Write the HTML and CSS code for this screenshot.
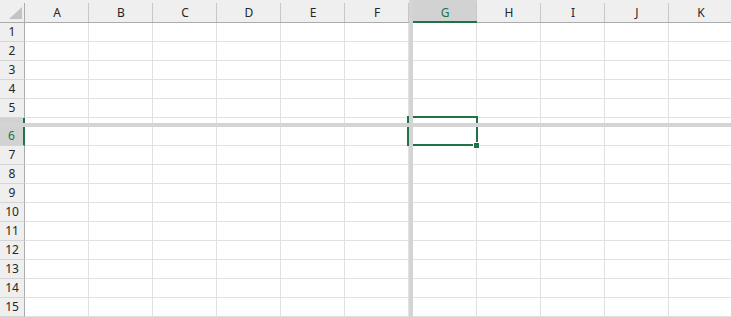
FILE: index.html
```html
<!doctype html>
<html>
<head>
<meta charset="utf-8">
<title>Sheet - split panes</title>
<link rel="stylesheet" href="styles.css">
</head>

<body>
<div class="sheet">
    <div class="pane pane-tl" id="tl"></div>
    <div class="vsplit"></div>
    <div class="pane pane-tr" id="tr"></div>
    <div class="hsplit"></div>
    <div class="pane pane-bl" id="bl"></div>
    <div class="pane pane-br" id="br"></div>
    <div class="selection"></div>
    <div class="handle"></div>
</div>
<script>
var letters = "ABCDEFGHIJK".split("");
var activeCol = "G";
var activeRow = 6;

// rowLabelTo: last row whose number is shown (the row after it is only a sliver)
function build(id, rowFrom, rowTo, colFrom, colTo, header, rowHeads, rowLabelTo){
	var pane = document.getElementById(id);
	var html = "";
	if(header){
		html += '<div class="row colhead">';
		if(rowHeads){
			html += '<div class="corner"><svg width="24" height="22"><polygon points="9,19 22,19 22,7" fill="#c3c3c3"/></svg></div>';
		}
		for(var c = colFrom; c <= colTo; c++){
			html += '<div class="ch' + (letters[c] == activeCol ? ' sel' : '') + '">' + letters[c] + '</div>';
		}
		html += '</div>';
	}
	for(var r = rowFrom; r <= rowTo; r++){
		html += '<div class="row">';
		if(rowHeads){
			html += '<div class="rh' + (r == activeRow ? ' sel' : '') + '">' + (r <= rowLabelTo ? r : '') + '</div>';
		}
		for(var c = colFrom; c <= colTo; c++){
			html += '<div class="c"></div>';
		}
		html += '</div>';
	}
	pane.innerHTML = html;
}

build("tl", 1, 6, 0, 5, true, true, 5);
build("tr", 1, 6, 6, 10, true, false, 5);
build("bl", 6, 15, 0, 5, false, true, 15);
build("br", 6, 15, 6, 10, false, false, 15);
</script>
</body>
</html>
```

FILE: styles.css
```css
*{box-sizing:border-box;}
body{margin:0;padding:0;background:#fff;font:12px "Noto Sans","Open Sans",sans-serif;color:#262626;}

.sheet{position:relative;width:731px;height:317px;overflow:hidden;display:grid;grid-template-columns:409px 4px 318px;grid-template-rows:123px 4px 190px;}
.pane{overflow:hidden;}
.pane-tl{grid-column:1;grid-row:1;}
.pane-tr{grid-column:3;grid-row:1;}
.pane-bl{grid-column:1;grid-row:3;}
.pane-br{grid-column:3;grid-row:3;}
.vsplit{grid-column:2;grid-row:1 / 4;background:#d4d4d4;position:relative;z-index:2;}
.hsplit{grid-column:1 / 4;grid-row:2;background:#d4d4d4;position:relative;z-index:2;}

.row{display:flex;height:19px;}
.row.colhead{height:23px;}

.corner{flex:none;width:25px;height:23px;background:#efefef;border-bottom:1px solid #ababab;background-image:linear-gradient(#ababab,#ababab);background-position:right 3px;background-size:1px 20px;background-repeat:no-repeat;}
.corner svg{display:block;}

.ch{flex:none;width:64px;height:23px;padding-top:3px;line-height:19px;text-align:center;background:#efefef;border-bottom:1px solid #ababab;background-image:linear-gradient(#c8c8c8,#c8c8c8);background-position:right 3px;background-size:1px 20px;background-repeat:no-repeat;}
.ch.sel{background-color:#d2d2d2;color:#217346;border-bottom:2px solid #217346;}

.rh{flex:none;width:25px;height:19px;line-height:18px;text-align:center;background:#efefef;border-right:1px solid #ababab;border-bottom:1px solid #d5d5d5;}
.rh.sel{background:#d2d2d2;color:#217346;border-right:2px solid #217346;}

.c{flex:none;width:64px;height:19px;border-right:1px solid #e1e1e1;border-bottom:1px solid #e1e1e1;}

.selection{position:absolute;left:407px;top:116px;width:71px;height:30px;border:2px solid #217346;z-index:1;}
.handle{position:absolute;left:473px;top:142px;width:7px;height:7px;background:#217346;border:1px solid #fff;z-index:3;}
```
